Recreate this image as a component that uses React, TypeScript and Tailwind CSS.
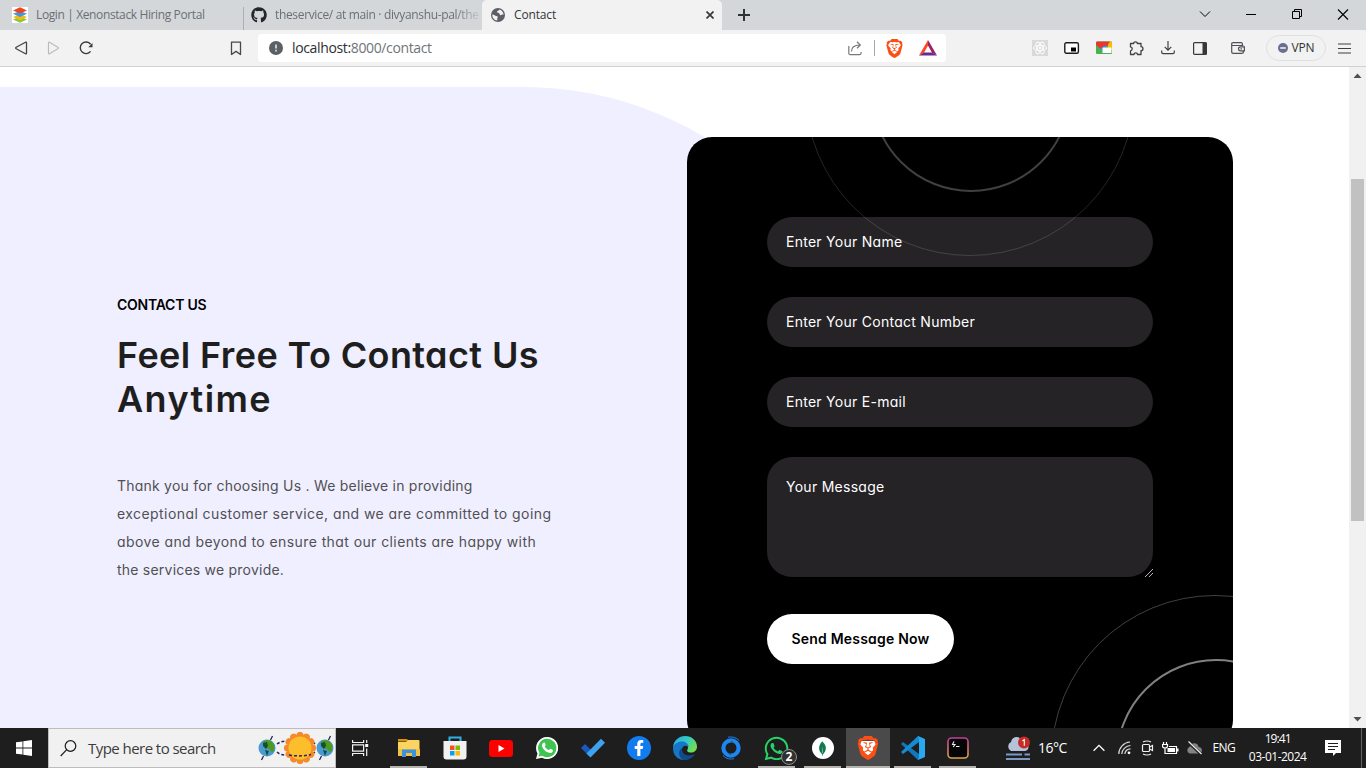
import type { ReactNode } from "react";
import { SiBrave, SiMongodb } from "react-icons/si";
import { FaGithub, FaWhatsapp, FaFacebookF } from "react-icons/fa";

function Cell({ children, className = "w-8" }: { children: ReactNode; className?: string }) {
  return <div className={`flex h-9 shrink-0 items-center justify-center ${className}`}>{children}</div>;
}

function BraveLogo({ size }: { size: number }) {
  return (
    <svg width={size} height={size} viewBox="0 0 24 24">
      <path d="M5 5h14l1 5-3 9-5 3-5-3-3-9z" fill="#fff" />
      <SiBrave size={24} color="#fb4f14" />
    </svg>
  );
}

function TabStrip() {
  return (
    <div className="flex h-[30px] shrink-0 bg-[#d3d7da] text-xs text-[#6b6f73]">
      <div className="flex w-[243px] items-center pl-3">
        <svg width="16" height="16" viewBox="0 0 16 16" className="mr-2 shrink-0">
          <rect width="16" height="16" fill="#fff" />
          <path d="M8 9.500l7 3-7 3.200-7-3.200z" fill="#8cc63f" />
          <path d="M8 7l7 3-7 3.200L1 10z" fill="#f7b718" />
          <path d="M8 4l7 2.800-7 3.200-7-3.200z" fill="#3e9bd9" />
          <path d="M8 .3l7 3.100-7 3.100-7-3.100z" fill="#ee4423" />
        </svg>
        <span className="whitespace-nowrap tracking-[-0.38px]">Login | Xenonstack Hiring Portal</span>
      </div>
      <div className="flex w-[239px] items-center">
        <div className="mt-[7px] h-[23px] w-px shrink-0 bg-[#abafb3]" />
        <FaGithub size={16} color="#23272b" className="ml-[7px] mr-2 shrink-0" />
        <span className="whitespace-nowrap tracking-[-0.34px] [mask-image:linear-gradient(to_right,black_88%,transparent_102%)]">
          theservice/ at main · divyanshu-pal/the
        </span>
      </div>
      <div className="flex w-60 items-center rounded-t-[5px] bg-[#f2f2f2] pl-[9px] pr-2 text-[#333639]">
        <svg width="14" height="14" viewBox="0 0 14 14" className="mr-[9px]">
          <circle cx="7" cy="7" r="7" fill="#5c6065" />
          <path d="M1.300 6.500c2.200 0 2.600 1.500 4 1.500 1.500 0 1.700.9 1.200 1.800-.5.800.1 1.200-.3 2.700C3 12.200 1.200 9.800 1.300 6.500zM8.500 1.500c-.3 1.500-2.500 1-2.500 2.300 0 1.500 2.700.7 2.700 2.500 0 1.200 1.200.9 1.900.4.700-.4 1.500-.1 2-.1C12.400 4.200 11 2.200 8.500 1.500z" fill="#f2f2f2" />
        </svg>
        <span className="grow tracking-[-0.15px]">Contact</span>
        <svg width="8" height="8" viewBox="0 0 8 8" stroke="#36393c" strokeWidth="1.700">
          <path d="M.5.5l7 7M7.500.5l-7 7" />
        </svg>
      </div>
      <div className="flex grow items-center pl-4">
        <svg width="12" height="12" viewBox="0 0 12 12" stroke="#303336" strokeWidth="2">
          <path d="M6 0v12M0 6h12" />
        </svg>
      </div>
      <svg width="184" height="30" viewBox="0 0 184 30" fill="none" stroke="#000">
        <path d="M18 11.500l5 5 5-5" strokeWidth="1" />
        <path d="M64 14.500h10" />
        <path d="M110.500 11.500h7v7h-7zM112.500 11.500v-2h7v7h-2" />
        <path d="M156 9.500l10 10M166 9.500l-10 10" strokeWidth="1.100" />
      </svg>
    </div>
  );
}

function Toolbar() {
  return (
    <div className="flex h-[37px] shrink-0 border-b border-[#d0d1d2] bg-[#f2f2f2]">
      <div className="flex w-[258px] pl-[5px]">
        <Cell>
          <svg width="14" height="14" viewBox="0 0 14 14" fill="none" stroke="#404347" strokeWidth="1.300" strokeLinejoin="round">
            <path d="M12.500 1.800v10.400q0 1-1 .5L2.200 7.700q-1-.7 0-1.400L11.500 1.300q1-.5 1 .5z" />
          </svg>
        </Cell>
        <Cell>
          <svg width="14" height="14" viewBox="0 0 14 14" fill="none" stroke="#b9bbbd" strokeWidth="1.200" strokeLinejoin="round">
            <path d="M2.500 1.800v10.400q0 1 1 .5l8.300-5q1-.7 0-1.400l-8.300-5q-1-.5-1 .5z" />
          </svg>
        </Cell>
        <Cell className="w-[34px]">
          <svg width="16" height="16" viewBox="0 0 16 16" fill="none" stroke="#36393c" strokeWidth="1.400">
            <path d="M12.600 11.400A5.800 5.800 0 1 1 12.600 4.200" />
            <path d="M14.500 3v4.200h-4.200z" fill="#36393c" stroke="none" />
          </svg>
        </Cell>
        <Cell className="ml-auto mr-[6px] w-8">
          <svg width="12" height="15" viewBox="0 0 12 15" fill="none" stroke="#45484c" strokeWidth="1.300" strokeLinejoin="round">
            <path d="M1.500 1.200h9v12.300L6 10.400l-4.500 3.100z" />
          </svg>
        </Cell>
      </div>
      <div className="my-1 flex h-7 w-[688px] items-center rounded bg-white pl-[11px]">
        <svg width="14" height="14" viewBox="0 0 14 14" className="mr-[9px]">
          <circle cx="7" cy="7" r="7" fill="#5b5f66" />
          <path d="M6 3.500h2v4H6zM6 8.800h2v1.800H6z" fill="#c9cbce" />
        </svg>
        <span className="grow text-sm tracking-[-0.36px] text-[#707478]">
          <span className="text-[#2c2f33]">localhost:</span>8000/contact
        </span>
        <svg width="14" height="15" viewBox="0 0 14 15" fill="none" stroke="#77797c" strokeWidth="1.200" className="mr-[12px]">
          <path d="M.8 5v7.200q0 1.500 1.500 1.500h9q1.800 0 1.800-1.800v-1" />
          <path d="M3.500 10.500C3.500 6.500 6 4 12 4M9 .8L12.300 4 9 7.200" />
        </svg>
        <div className="h-4 w-px bg-[#a8a9ab]" />
        <Cell className="ml-[3px] w-8">
          <BraveLogo size={19} />
        </Cell>
        <Cell className="w-9">
          <svg width="18" height="16" viewBox="0 0 18 16">
            <path d="M9 0L0 15.500l5-2.800L9 5.500z" fill="#ff4724" />
            <path d="M9 0l9 15.500-5-2.800L9 5.500z" fill="#9e1f63" />
            <path d="M0 15.500h18l-5-3H5z" fill="#662d91" />
          </svg>
        </Cell>
      </div>
      <div className="flex grow pl-[78px]">
        <Cell>
          <svg width="16" height="16" viewBox="0 0 16 16" fill="none" stroke="#fbfbfb">
            <rect width="16" height="16" fill="#d9d9d9" stroke="none" />
            <ellipse cx="8" cy="8" rx="6.500" ry="2.600" />
            <ellipse cx="8" cy="8" rx="6.500" ry="2.600" transform="rotate(60 8 8)" />
            <ellipse cx="8" cy="8" rx="6.500" ry="2.600" transform="rotate(120 8 8)" />
            <circle cx="8" cy="8" r="1" fill="#fff" />
          </svg>
        </Cell>
        <Cell>
          <svg width="16" height="12" viewBox="0 0 16 12">
            <rect x=".8" y=".7" width="13.600" height="10.600" rx="1.500" fill="#fff" stroke="#1b1d1f" strokeWidth="1.400" />
            <path d="M7 5.500h5v4H7z" fill="#000" />
          </svg>
        </Cell>
        <Cell>
          <svg width="16" height="14" viewBox="0 0 16 14">
            <rect y=".5" width="16" height="12.500" rx="1" fill="#4caf50" />
            <path d="M12 .5h3l1 1V9h-4z" fill="#fbbc04" />
            <path d="M1 .5h13L11 5 5 8 0 4V1.500z" fill="#e8372c" />
            <path d="M4 7.500L10 4v3.500L7 10z" fill="#4285f4" />
            <rect x="6.500" y="6.500" width="9" height="5.500" rx=".5" fill="#fff" />
          </svg>
        </Cell>
        <Cell>
          <svg width="15" height="15" viewBox="0 0 15 15" fill="none" stroke="#3e4145" strokeWidth="1.300" strokeLinejoin="round">
            <path d="M1.500 2.500h3.200C4.500.2 8.500.2 8.300 2.500h3.700v3.200c2.600 0 2.600 3.900 0 3.900v3.900H8.500c0-2.200-3.500-2.200-3.500 0H1.500V9.800c2.300-.2 2.300-3.700 0-3.900z" />
          </svg>
        </Cell>
        <Cell>
          <svg width="14" height="14" viewBox="0 0 14 14" fill="none" stroke="#3e4145" strokeWidth="1.200">
            <path d="M7 0v9M3.700 5.800L7 9.100l3.300-3.300M.7 9.500v1.800q0 1.400 1.400 1.400h9.800q1.400 0 1.400-1.400V9.500" />
          </svg>
        </Cell>
        <Cell>
          <svg width="14" height="13" viewBox="0 0 14 13">
            <rect x=".6" y=".6" width="12.800" height="11.800" rx="1" fill="none" stroke="#36393c" strokeWidth="1.200" />
            <path d="M9.500.5h3.900v12H9.500z" fill="#36393c" />
          </svg>
        </Cell>
        <Cell className="ml-[6px] w-8">
          <svg width="14" height="12" viewBox="0 0 14 12" fill="none" stroke="#4e5155" strokeWidth="1.200">
            <path d="M12.400 3.500H1.200M11.400 3.300V2q0-1.300-1.300-1.300H2.100Q.7.700.7 2v7.900q0 1.400 1.400 1.400h8.700q1.600 0 1.600-1.400V8.800M13.400 4.800H9.500q-2 .1-2 2t2 2h3.900zM9.500 6.800h1.500" />
          </svg>
        </Cell>
        <div className="ml-3 mt-[5px] flex h-[26px] w-[60px] items-center justify-center rounded-full border border-[#dfe0e1] text-xs tracking-[-0.2px] text-[#303337]">
          <svg width="10" height="10" viewBox="0 0 10 10" className="mr-1">
            <circle cx="5" cy="5" r="5" fill="#686f8f" />
            <path d="M2.200 4.300h5.600v1.400H2.200z" fill="#fff" />
          </svg>
          VPN
        </div>
        <Cell className="ml-[2px] w-8">
          <svg width="13" height="11" viewBox="0 0 13 11" stroke="#3b3e42" strokeWidth="1.200">
            <path d="M0 1h13M0 5.500h13M0 10h13" />
          </svg>
        </Cell>
      </div>
    </div>
  );
}

function Field({ label }: { label: string }) {
  return (
    <div className="flex h-[50px] items-center rounded-[25px] bg-[#252326] pl-[19px]">{label}</div>
  );
}

function ContactCard() {
  return (
    <div className="relative h-[608px] w-[546px] shrink-0 overflow-hidden rounded-[25px] bg-black px-20 pt-20 text-sm tracking-[0.27px] text-white">
      <div className="flex flex-col gap-[30px]">
        <Field label="Enter Your Name" />
        <Field label="Enter Your Contact Number" />
        <Field label="Enter Your E-mail" />
        <div className="relative h-[120px] rounded-[25px] bg-[#252326] pl-[19px] pt-5 leading-5">
          Your Message
          <svg width="8" height="8" viewBox="0 0 8 8" stroke="#b5b5b5" className="absolute bottom-0 right-0">
            <path d="M0 8l8-8M4 8l4-4" />
          </svg>
        </div>
      </div>
      <button className="mt-[37px] h-[50px] w-[187px] rounded-full bg-white text-sm font-semibold tracking-[0.2px] text-black">
        Send Message Now
      </button>
      <div className="absolute -top-[145px] left-[184px] h-[200px] w-[200px] rounded-full border-2 border-white/25" />
      <div className="absolute -top-[211px] left-[118px] h-[330px] w-[330px] rounded-full border border-white/[0.14]" />
      <div className="absolute left-[364px] top-[458px] h-[328px] w-[328px] rounded-full border border-white/25" />
      <div className="absolute left-[429px] top-[522px] h-[200px] w-[200px] rounded-full border-2 border-white/50" />
    </div>
  );
}

function Page() {
  return (
    <div className="flex min-h-0 grow bg-white">
      <div className="relative flex grow items-start overflow-hidden pl-[117px] font-[Inter,sans-serif] [font-feature-settings:'cv11']">
        <div className="absolute left-0 top-5 h-[900px] w-[874px] rounded-tr-[350px] bg-[#f0efff]" />
        <div className="relative w-[570px] pt-[228px]">
          <p className="text-sm font-semibold leading-5 tracking-[-0.25px] text-black">CONTACT US</p>
          <h1 className="mt-[18px] text-[36px] font-semibold leading-[44px] text-[#1e1e1e]">
            <span className="block tracking-[0.4px]">Feel Free To Contact Us</span>
            <span className="block tracking-[1.400px]">Anytime</span>
          </h1>
          <p className="mt-[51px] whitespace-nowrap text-sm leading-7 text-[#505053]">
            <span className="block tracking-[0.22px]">Thank you for choosing Us . We believe in providing</span>
            <span className="block tracking-[0.43px]">exceptional customer service, and we are committed to going</span>
            <span className="block tracking-[0.41px]">above and beyond to ensure that our clients are happy with</span>
            <span className="block tracking-[0.22px]">the services we provide.</span>
          </p>
        </div>
        <div className="relative mt-[70px]">
          <ContactCard />
        </div>
      </div>
      <div className="flex w-[17px] shrink-0 flex-col items-center bg-[#f1f1f1] py-[6px]">
        <svg width="9" height="6" viewBox="0 0 9 6">
          <path d="M4.500.5L8.500 5h-8z" fill="#505050" />
        </svg>
        <div className="mt-[100px] h-[342px] w-[13px] bg-[#c1c1c1]" />
        <svg width="9" height="6" viewBox="0 0 9 6" className="mt-auto">
          <path d="M4.500 5.500L.5 1h8z" fill="#505050" />
        </svg>
      </div>
    </div>
  );
}

function Earth() {
  return (
    <svg width="18" height="26" viewBox="0 0 18 26">
      <circle cx="9" cy="13" r="8.500" fill="#4a9ad4" />
      <path d="M5 7c3-3 8-2 10 1 2 3 2 6 0 9-1 1-2-1-3-2s-2-1-3-2c-3-1-5-3-4-6z" fill="#4f9a1e" />
      <path d="M5 8l4-1 1 4-2 3-3-3zM7 15l4 1-2 5z" fill="#17502d" />
      <path d="M14.500 1l-2 4M3.500 25l2-4" stroke="#27245a" strokeWidth="1.300" />
    </svg>
  );
}

function SolarDoodle() {
  const petals = Array.from({ length: 12 }, (_, i) => i * 30);
  return (
    <div className="mr-px flex items-center">
      <Earth />
      <svg width="40" height="32" viewBox="0 0 40 32">
        <path d="M1 12q4-3 10-3M1 20q3 3 9 3M32 9q4 0 7 3M32 23q4-1 7-3" fill="none" stroke="#27245a" strokeWidth="1.500" strokeDasharray="3 2" />
        {petals.map((a) => (
          <circle key={a} cx="24" cy="3.500" r="3.600" fill="#f58a2b" transform={`rotate(${a} 24 16)`} />
        ))}
        <circle cx="24" cy="16" r="11.500" fill="#fcbf2b" />
        <path d="M13 23q11 2 22-.5" fill="none" stroke="#27245a" strokeWidth="1.500" strokeDasharray="3 2" />
      </svg>
      <Earth />
    </div>
  );
}

function TaskItem({
  children,
  open,
  active,
  width = "w-[46px]",
}: {
  children: ReactNode;
  open?: boolean;
  active?: boolean;
  width?: string;
}) {
  return (
    <div className={`flex h-full shrink-0 flex-col items-center ${width} ${active ? "bg-[#4a4a4b]" : ""}`}>
      <div className="flex grow items-center justify-center pt-0.5">{children}</div>
      <div className={`h-0.5 ${active ? "w-full" : "w-[37px]"} ${open ? "bg-[#b5b3ae]" : ""}`} />
    </div>
  );
}

function Taskbar() {
  return (
    <div className="flex h-10 shrink-0 bg-[#1e1e1e] text-white">
      <div className="flex w-12 shrink-0 items-center justify-center">
        <svg width="16" height="16" viewBox="0 0 16 16" fill="#fff">
          <path d="M0 2.300L6.500 1.400v6.100H0zM7.300 1.300L16 0v7.500H7.300zM0 8.400h6.500v6.200L0 13.700zM7.300 8.400H16V16l-8.700-1.200z" />
        </svg>
      </div>
      <div className="flex w-72 shrink-0 items-center border border-[#bdbdbd] bg-[#f1f1f1] pl-[11px]">
        <svg width="17" height="17" viewBox="0 0 17 17" fill="none" stroke="#1c1c1c" strokeWidth="1.200" className="mr-[11px]">
          <circle cx="10.500" cy="6" r="5.300" />
          <path d="M6.700 9.700L.7 16" />
        </svg>
        <span className="grow whitespace-nowrap text-[15px] tracking-[-0.55px] text-[#3c3c3c]">Type here to search</span>
        <SolarDoodle />
      </div>
      <div className="flex w-[49.500px] shrink-0 items-center justify-center">
        <svg width="17" height="16" viewBox="0 0 17 16" fill="none" stroke="#f2f2f2" strokeWidth="1.200">
          <path d="M.6 0v2.500h11V0M.6 16v-2.500h11V16M.6 4.800h11v6.400H.6zM14.700 0v3M14.700 8.500V16" />
          <path d="M13.200 4h3v3h-3z" fill="#fff" stroke="none" />
        </svg>
      </div>
      <div className="flex shrink-0">
        <TaskItem open>
          <svg width="22" height="18" viewBox="0 0 22 18">
            <path d="M0 0h9l2 2.500H0z" fill="#d99400" />
            <path d="M10 1h10.500q1 0 1 1v15H0V3h8z" fill="#fcd462" />
            <path d="M0 10h22v7H0z" fill="#f4bf45" />
            <path d="M4 18v-7.500h14V18h-4v-4H8v4z" fill="#3c93d6" />
          </svg>
        </TaskItem>
        <TaskItem>
          <svg width="24" height="24" viewBox="0 0 24 24">
            <path d="M6.500 6V1.500h11V6" fill="none" stroke="#2fb1e8" strokeWidth="2" />
            <path d="M.5 5h23v15.500q0 3-3 3h-17q-3 0-3-3z" fill="#f1f1f1" />
            <path d="M7 9.500h4.500V14H7z" fill="#f25022" />
            <path d="M12.500 9.500H17V14h-4.500z" fill="#7fba00" />
            <path d="M7 15h4.500v4.500H7z" fill="#00a4ef" />
            <path d="M12.500 15H17v4.500h-4.500z" fill="#ffb900" />
          </svg>
        </TaskItem>
        <TaskItem>
          <svg width="24" height="17" viewBox="0 0 24 17">
            <rect width="24" height="17" rx="3.500" fill="#f00" />
            <path d="M9.500 5l6 3.500-6 3.500z" fill="#fff" />
          </svg>
        </TaskItem>
        <TaskItem>
          <svg width="22" height="22" viewBox="0 0 22 22">
            <path d="M11 0a11 11 0 1 1-5 20.700L0 22l1.500-5.500A11 11 0 0 1 11 0z" fill="#fff" />
            <path d="M11 1.800a9.200 9.200 0 1 1-4.700 17L2.500 19.500l1-3.600A9.200 9.200 0 0 1 11 1.800z" fill="#3fc351" />
            <path d="M7.500 5.800c.8-.6 1.500 0 2 1.700.5 1-1 1.600-.5 2.300 1 1.700 2.200 2.700 3.800 3.200.6.200 1.200-1.500 1.900-1.200l2.100 1.100c.7.500-.3 2.600-1.800 3-3 .7-8.700-3.200-9-7.400 0-1.200.7-2.200 1.500-2.700z" fill="#fff" />
          </svg>
        </TaskItem>
        <TaskItem>
          <svg width="24" height="20" viewBox="0 0 24 20">
            <path d="M0 10l4-4 9 9-4 4z" fill="#185abd" />
            <path d="M5.500 15.500L20 .8l4 4L9.500 19.500z" fill="#3fa2ef" />
          </svg>
        </TaskItem>
        <TaskItem>
          <div className="flex h-6 w-6 items-end justify-center rounded-full bg-[#107cee] pb-1">
            <FaFacebookF size={16} color="#fff" />
          </div>
        </TaskItem>
        <TaskItem>
          <svg width="24" height="24" viewBox="0 0 24 24">
            <defs>
              <linearGradient id="edgeTop" x1="0" y1="0" x2="1" y2="0.5">
                <stop offset="0" stopColor="#29a8e8" />
                <stop offset=".55" stopColor="#32c9c8" />
                <stop offset="1" stopColor="#70de55" />
              </linearGradient>
            </defs>
            <path d="M0 11C1 4 6 0 12 0c7 0 12 5 12 10.500 0 4-3 6-6 6-3.500 0-4.500-1.500-3.500-3C16.500 10 13 7 9 7c-4 0-7 2-9 4z" fill="url(#edgeTop)" />
            <path d="M0 11c2-4 6-5.500 9-5.500 4 0 6.500 2.500 6.500 5.500-4-3-7 0-6.500 4 .6 4.500 5 7 9.500 5.500C12 27 0 24 0 12z" fill="#1677c9" />
            <path d="M9 12c-1 5 3.500 10 13 6-3 5-8 6.500-12 5.800C5 21 5 14 9 12z" fill="#114a8b" />
          </svg>
        </TaskItem>
        <TaskItem>
          <svg width="24" height="24" viewBox="0 0 24 24" fill="none" stroke="#1c86f2">
            <circle cx="12" cy="12" r="7.600" strokeWidth="4.200" />
            <path d="M8.500 9C6.500 12 7.500 17 12 18.500M15.500 15c2-3 1-8-3.500-9.500" stroke="#1e1e1e" strokeWidth=".6" />
            <path d="M9 1.300C12 .5 17 1 20 4.500M15 22.700C12 23.500 7 23 4 19.500" strokeWidth="1" />
          </svg>
        </TaskItem>
        <TaskItem open>
          <div className="relative">
            <FaWhatsapp size={27} color="#25d366" />
            <div className="absolute -bottom-[3px] -right-[7px] flex h-4 w-4 items-center justify-center rounded-full border border-[#8d8d8d] bg-[#303030] text-xs font-bold leading-none">
              2
            </div>
          </div>
        </TaskItem>
        <TaskItem open>
          <div className="flex h-[22px] w-[22px] items-center justify-center rounded-full bg-white">
            <SiMongodb size={15} color="#10794f" />
          </div>
        </TaskItem>
        <TaskItem open active width="w-11">
          <BraveLogo size={24} />
        </TaskItem>
        <TaskItem open>
          <svg width="24" height="24" viewBox="0 0 24 24">
            <path d="M0 8l2-2 16 12v5.500L17 24z" fill="#1178bd" />
            <path d="M0 16l2 2L18 6V.500L17 0z" fill="#168bd4" />
            <path d="M17 0l7 3v18l-7 3 1-3V3z" fill="#28a8f0" />
          </svg>
        </TaskItem>
        <TaskItem open width="w-11">
          <svg width="22" height="22" viewBox="0 0 22 22" fill="none">
            <defs>
              <linearGradient id="termEdge" x1="0" y1="0" x2="0" y2="1">
                <stop offset="0" stopColor="#c43d9b" />
                <stop offset="1" stopColor="#dba44c" />
              </linearGradient>
            </defs>
            <rect x="1" y="1" width="20" height="20" rx="3.500" fill="#050505" stroke="url(#termEdge)" strokeWidth="1.600" />
            <path d="M7 4.500l-1.500 3H8L6.200 10M9 9.500h3.500" stroke="#eee" strokeWidth="1.100" />
          </svg>
        </TaskItem>
      </div>
      <div className="ml-[26.500px] flex grow items-center text-xs">
        <svg width="24" height="25" viewBox="0 0 24 25">
          <path d="M5 15a5 5 0 0 1 0-9C6 0 14-1 16 5c7-1 9 9 3 10z" fill="#b5c3da" />
          <path d="M0 18.500h16M18.500 18.500H24M0 23h24" stroke="#7b98c6" strokeWidth="2" />
          <circle cx="18" cy="6.500" r="6" fill="#c62c23" />
          <path d="M16.500 5l1.800-1.300v6" stroke="#fff" strokeWidth="1.100" fill="none" />
        </svg>
        <span className="ml-2 w-[54.500px] text-sm tracking-[-0.5px]">16°C</span>
        <svg width="12" height="8" viewBox="0 0 12 8" fill="none" stroke="#fff" strokeWidth="1.300">
          <path d="M.6 6.800L6 1.400l5.400 5.400" />
        </svg>
        <svg width="14" height="14" viewBox="0 0 14 14" fill="none" stroke="#dcdcdc" strokeWidth="1.200" className="ml-[13px]">
          <path d="M.8 13A12 12 0 0 1 12 1M3.800 13A9 9 0 0 1 12.500 4.500M6.800 13A6 6 0 0 1 12.500 7.800" />
          <circle cx="11" cy="11.800" r="1.400" fill="#fff" stroke="none" />
        </svg>
        <svg width="14" height="16" viewBox="0 0 14 16" fill="none" stroke="#f0f0f0" strokeWidth="1.200" className="ml-[9px]">
          <rect x="1.500" y="4.500" width="7" height="7" rx="1" />
          <path d="M8.500 7l3-1.500v5L8.500 9M2 2q4-2 8 0M2 14q4 2 8 0" />
        </svg>
        <svg width="17" height="13" viewBox="0 0 17 13" fill="none" stroke="#fff" strokeWidth="1.200" className="ml-[7px]">
          <path d="M1.500 0v2.500M4.500 0v2.500M.5 2.500h5v2q-.5 1.500-2.500 1.500t-2.500-1.500zM3 6v5.500h11.500v-7H7" />
          <path d="M5.500 6h7.500v4H5.500zM15 6.500h1.500v3H15z" fill="#fff" stroke="none" />
        </svg>
        <svg width="17" height="14" viewBox="0 0 17 14" className="ml-[7px]">
          <path d="M3.500 12.500a3.500 3.500 0 0 1 0-6.500C5 1 12 1 12.500 6c4.500 0 4.500 6.500.5 6.500z" fill="#838383" />
          <path d="M2 1l13 12" stroke="#1e1e1e" strokeWidth="3" />
          <path d="M2.500.5l13 12.500" stroke="#eee" strokeWidth="1.200" />
        </svg>
        <span className="ml-[10px] tracking-[-0.6px]">ENG</span>
        <div className="ml-[12.500px] w-[60px] text-center leading-[18px]">
          <div className="tracking-[-0.95px]">19:41</div>
          <div className="whitespace-nowrap tracking-[-0.5px]">03-01-2024</div>
        </div>
        <svg width="16" height="16" viewBox="0 0 16 16" className="ml-[17px]">
          <path d="M0 0h16v13h-5l-3 3v-3H0z" fill="#fff" />
          <path d="M3 3.500h10M3 6.500h10M3 9.500h7" stroke="#1e1e1e" />
        </svg>
        <div className="ml-auto mr-[4px] h-10 w-px bg-[#626262]" />
      </div>
    </div>
  );
}

export default function App() {
  return (
    <div className="flex h-[768px] w-[1366px] flex-col overflow-hidden font-['Open_Sans',sans-serif]">
      <TabStrip />
      <Toolbar />
      <Page />
      <Taskbar />
    </div>
  );
}
